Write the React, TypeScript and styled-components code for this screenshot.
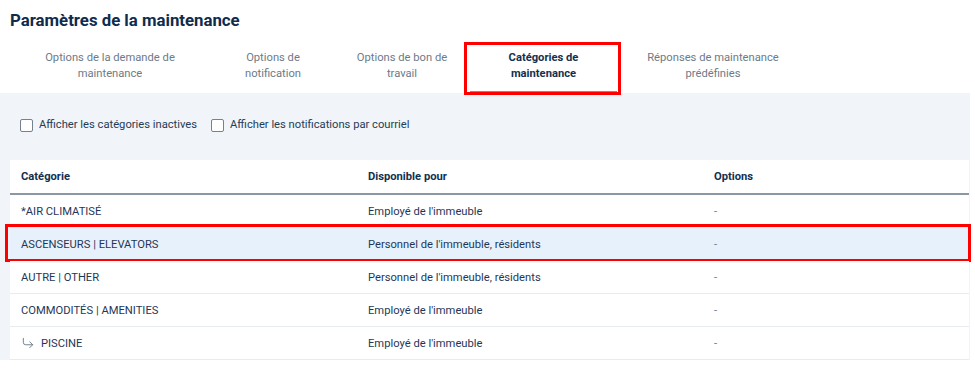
// @ts-nocheck
import styled, { createGlobalStyle, css } from 'styled-components';
import { CornerDownRight } from 'lucide-react';

const GlobalStyle = createGlobalStyle`
  html, body {
    margin: 0;
    padding: 0;
    background: #ffffff;
    font-family: Roboto, "Liberation Sans", Arial, sans-serif;
  }
`;

const tabs = [
  { label: 'Options de la demande de maintenance', width: 204 },
  { label: 'Options de notification', width: 122 },
  { label: 'Options de bon de travail', width: 136 },
  { label: 'Catégories de maintenance', width: 147, active: true },
  { label: 'Réponses de maintenance prédéfinies', width: 192 }
];

const rows = [
  { name: '*AIR CLIMATISÉ', audience: "Employé de l'immeuble" },
  { name: 'ASCENSEURS | ELEVATORS', audience: "Personnel de l'immeuble, résidents", selected: true },
  { name: 'AUTRE | OTHER', audience: "Personnel de l'immeuble, résidents" },
  { name: 'COMMODITÉS | AMENITIES', audience: "Employé de l'immeuble" },
  { name: 'PISCINE', audience: "Employé de l'immeuble", child: true }
];

export default function App() {
  return (
    <>
      <GlobalStyle />
      <Page>
        <Header>
          <Title>Paramètres de la maintenance</Title>
        </Header>

        <TabBar>
          {tabs.map((tab) => (
            <Tab key={tab.label} $width={tab.width} $active={tab.active}>
              {tab.label}
            </Tab>
          ))}
        </TabBar>

        <Content>
          <Filters>
            <CheckLabel>
              <CheckBox />
              Afficher les catégories inactives
            </CheckLabel>
            <CheckLabel>
              <CheckBox />
              Afficher les notifications par courriel
            </CheckLabel>
          </Filters>

          <Table>
            <HeadRow>
              <HeadCell>Catégorie</HeadCell>
              <HeadCell>Disponible pour</HeadCell>
              <HeadCell>Options</HeadCell>
            </HeadRow>
            {rows.map((row) => (
              <Row key={row.name} $selected={row.selected}>
                <Cell>
                  {row.child && <CornerDownRight size={14} strokeWidth={1.6} color="#6a7889" />}
                  {row.name}
                </Cell>
                <Cell>{row.audience}</Cell>
                <Cell $muted>-</Cell>
              </Row>
            ))}
          </Table>
        </Content>
      </Page>
    </>
  );
}

const Page = styled.div`
  width: 975px;
`;

const Header = styled.header`
  padding: 9px 10px 0;
`;

const Title = styled.h1`
  margin: 0;
  font-size: 16.8px;
  line-height: 23px;
  font-weight: 700;
  color: #0f2b4d;
`;

const TabBar = styled.nav`
  display: flex;
  margin-top: 8px;
  padding-left: 8px;
  position: relative;
  z-index: 1;
`;

const redBox = css`
  content: '';
  position: absolute;
  border: 3px solid #ff0000;
  pointer-events: none;
`;

const Tab = styled.div`
  position: relative;
  box-sizing: border-box;
  width: ${({ $width }) => $width}px;
  height: 53px;
  padding: 1px 20px 0;
  display: flex;
  align-items: center;
  justify-content: center;
  text-align: center;
  font-size: 11.2px;
  line-height: 16px;
  color: #6d7a89;
  border-bottom: 2px solid transparent;

  ${({ $active }) =>
    $active &&
    css`
      color: #12304f;
      font-weight: 700;
      border-bottom-color: #4f9be0;

      &::after {
        ${redBox};
        top: 2px;
        bottom: -4px;
        left: -6px;
        right: -4px;
      }
    `}
`;

const Content = styled.section`
  width: 970px;
  box-sizing: border-box;
  padding: 0 1px 0 10px;
  background: #f1f4f8;
`;

const Filters = styled.div`
  display: flex;
  align-items: center;
  gap: 14px;
  padding: 24px 10px 27px;
`;

const CheckLabel = styled.label`
  display: inline-flex;
  align-items: center;
  gap: 6px;
  font-size: 11.2px;
  line-height: 16px;
  color: #263c55;
`;

const CheckBox = styled.span`
  display: inline-block;
  box-sizing: border-box;
  width: 13px;
  height: 13px;
  border: 1.5px solid #75818f;
  border-radius: 2px;
  background: #ffffff;
`;

const Table = styled.div`
  background: #ffffff;
`;

const gridCols = css`
  display: grid;
  grid-template-columns: 347px 346px 1fr;
`;

const HeadRow = styled.div`
  ${gridCols};
  height: 33px;
  align-items: center;
  border-bottom: 2px solid #8b97a5;
`;

const HeadCell = styled.div`
  padding-left: 11px;
  font-size: 11.2px;
  font-weight: 700;
  color: #12304f;
`;

const Row = styled.div`
  ${gridCols};
  position: relative;
  height: 33px;
  box-sizing: border-box;
  align-items: center;
  border-bottom: 1px solid #e8ebef;
  background: ${({ $selected }) => ($selected ? '#e7f1fc' : '#ffffff')};

  ${({ $selected }) =>
    $selected &&
    css`
      &::after {
        ${redBox};
        top: -4px;
        bottom: -2px;
        left: -5px;
        right: -2px;
      }
    `}
`;

const Cell = styled.div`
  display: flex;
  align-items: center;
  gap: 6px;
  padding-left: 11px;
  font-size: 11.2px;
  color: ${({ $muted }) => ($muted ? '#6d7a89' : '#1f3757')};
`;
